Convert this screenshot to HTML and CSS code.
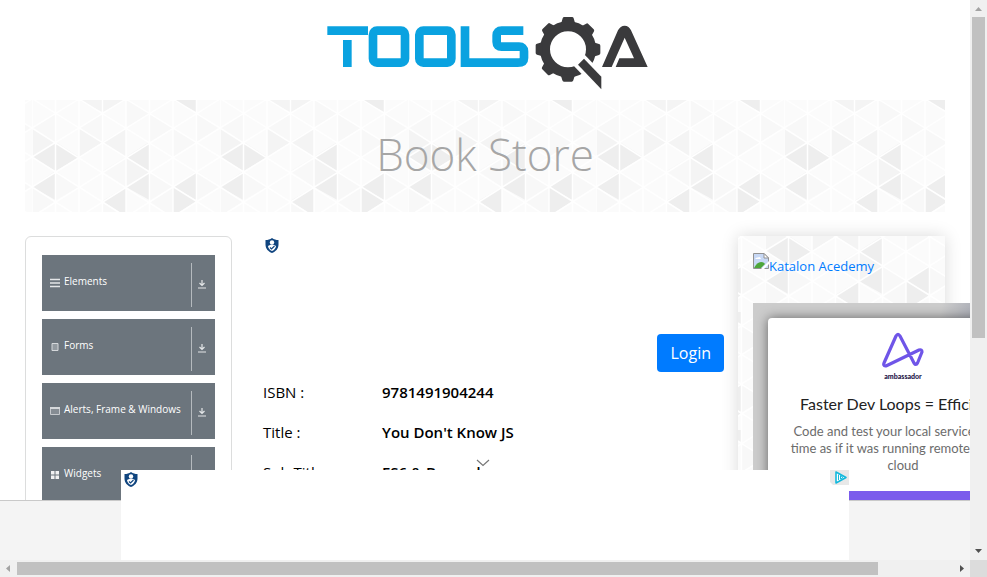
FILE: index.html
```html
<!DOCTYPE html>
<html lang="en">
<head>
<meta charset="utf-8">
<title>Book Store</title>
<link rel="stylesheet" href="styles.css">
</head>
<body>
<svg class="defs" aria-hidden="true">
  <defs>
    <g id="tile">
      <path fill="#fbfbfb" d="M0 0H188V118H0Z"/>
      <path fill="#f8f8f8" d="M0 28L23.500 13V42ZM47 28L70.500 42V13ZM94 0V28L117.500 13ZM141 28L117.500 42V13ZM164.500 13V42L188 28ZM47 57L23.500 42V71ZM94 57V87L70.500 71ZM141 28V57L164.500 42ZM164.500 71V100L188 87ZM23.500 71V100L47 87ZM141 87L117.500 71V100ZM0 87V116L23.500 101ZM70.500 101V118H94V87ZM117.500 101L141 118V87Z"/>
      <path fill="#f4f4f4" d="M47 28V57L70.500 42ZM94 28V57L70.500 42ZM47 0H94L70.500 12ZM0 28L23.500 42L0 57ZM94 57L117.500 71L94 87Z"/>
      <path fill="#eeeeee" d="M0 57L23.500 42V71ZM47 57L23.500 42V71ZM0 87L23.500 71V100ZM94 57L117.500 42V71ZM94 87L117.500 71V100ZM141 87L164.500 71V100ZM141 0H164.500V12ZM141 87V116L164.500 101ZM70.500 101L94 87V116Z"/>
      <path fill="none" stroke="#fff" stroke-width="1.500" d="M0 0V118M23.500 0V118M47 0V118M70.500 0V118M94 0V118M117.500 0V118M141 0V118M164.500 0V118M0 -1.500L188 116M0 28L141 118M0 57L94 117M0 87L47 117M47 -1L188 87M94 -1L188 57M141 -1L188 28M0 28L47 -1M0 57L94 -1M0 87L141 -1M0 117L188 -1M47 117L188 28M94 117L188 57M141 117L188 87"/>
    </g>
    <pattern id="triangles" width="188" height="118" x="7" y="0" patternUnits="userSpaceOnUse"><use href="#tile"/></pattern>
    <pattern id="triangles-side" width="188" height="118" x="27" y="-42" patternUnits="userSpaceOnUse"><use href="#tile"/></pattern>
    <symbol id="download" viewBox="0 0 10 10"><path d="M5 1V6M2.500 4L5 6.500L7.500 4M1 9H9" fill="none" stroke="#e4e6e8" stroke-width="1.200"/></symbol>
    <symbol id="shield" viewBox="0 0 14 15">
      <path fill="#10457f" d="M7 0C9 1.500 11 2 13.500 2V6.500C13.500 11 10.500 13.500 7 15C3.500 13.500.5 11 .5 6.500V2C3 2 5 1.500 7 0Z"/>
      <circle cx="7" cy="4.500" r="2.200" fill="#fff"/>
      <path fill="#fff" d="M3 8Q7 5.500 11 8Q10.500 11.500 7 13Q3.500 11.500 3 8Z"/>
      <path fill="none" stroke="#10457f" stroke-width="1.200" d="M5 9.500L6.500 11L9.500 8"/>
    </symbol>
  </defs>
</svg>
<div class="window">
  <div class="view">
    <header class="header">
      <svg class="logo" viewBox="38 45 975 225" role="img" aria-label="ToolsQA">
        <g fill="none" stroke="#0aa2e0" stroke-width="26">
          <path d="M51 92H173M111 120V201"/>
          <rect x="188" y="92" width="96" height="96" rx="12"/>
          <rect x="327" y="92" width="96" height="96" rx="12"/>
          <path d="M464 79V188H622Q641 188 641 174V154Q641 140 626 140H574Q559 140 559 126V106Q559 92 574 92H639"/>
        </g>
        <g fill="#3a3a3c">
          <circle cx="773" cy="148" r="69" fill="none" stroke="#3a3a3c" stroke-width="30"/>
          <g id="teeth">
            <path id="tooth" d="M752 72L757 55Q758 51 762 51H785Q789 51 790 55L795 72Z"/>
            <use href="#tooth" transform="rotate(45 773 148)"/>
            <use href="#tooth" transform="rotate(90 773 148)"/>
            <use href="#tooth" transform="rotate(180 773 148)"/>
            <use href="#tooth" transform="rotate(225 773 148)"/>
            <use href="#tooth" transform="rotate(270 773 148)"/>
            <use href="#tooth" transform="rotate(315 773 148)"/>
          </g>
          <path fill="#fff" d="M790 197L823 164L890 234V280H870Z"/>
          <path d="M803 194L821 176L873 230V268Z"/>
          <path d="M875 201L923 91Q930 77 943 77Q956 77 962 91L1012 201H916L927 175H971L943 113L904 201Z"/>
        </g>
      </svg>
    </header>
    <div class="banner">
      <svg class="backdrop" aria-hidden="true"><rect width="100%" height="100%" fill="url(#triangles)"/></svg>
      <h1 class="title">Book Store</h1>
    </div>
    <div class="columns">
      <nav class="menu">
        <button class="group" type="button">
          <svg class="icon" viewBox="0 0 10 10"><path d="M0 1.500H10M0 5H10M0 8.500H10" stroke="#e4e6e8" stroke-width="1.500"/></svg>
          <span class="name">Elements</span><span class="drop"><svg class="arrow"><use href="#download"/></svg></span>
        </button>
        <button class="group" type="button">
          <svg class="icon" viewBox="0 0 10 10"><path d="M2 1.500H8V8.500H2Z" fill="#939aa0" stroke="#d5d8db"/></svg>
          <span class="name">Forms</span><span class="drop"><svg class="arrow"><use href="#download"/></svg></span>
        </button>
        <button class="group" type="button">
          <svg class="icon" viewBox="0 0 10 10"><path d="M.5 1.500H9.500V8.500H.5Z" fill="#858c93" stroke="#c5c8cc"/><path d="M0 2H10" stroke="#d5d8db" stroke-width="2"/></svg>
          <span class="name">Alerts, Frame &amp; Windows</span><span class="drop"><svg class="arrow"><use href="#download"/></svg></span>
        </button>
        <button class="group" type="button">
          <svg class="icon" viewBox="0 0 10 10"><path d="M1 1H4.500V4.500H1ZM5.500 1H9V4.500H5.500ZM1 5.500H4.500V9H1ZM5.500 5.500H9V9H5.500Z" fill="#f0f1f2"/></svg>
          <span class="name">Widgets</span><span class="drop"><svg class="arrow"><use href="#download"/></svg></span>
        </button>
      </nav>
      <main class="book">
        <svg class="shield"><use href="#shield"/></svg>
        <div class="actions"><button class="login" type="button">Login</button></div>
        <dl class="facts">
          <dt>ISBN :</dt><dd>9781491904244</dd>
          <dt>Title :</dt><dd>You Don't Know JS</dd>
          <dt>Sub Title :</dt><dd>ES6 &amp; Beyond</dd>
        </dl>
      </main>
      <aside class="side">
        <svg class="backdrop" aria-hidden="true"><rect width="100%" height="100%" fill="url(#triangles-side)"/></svg>
        <a class="academy" href="#"><svg class="broken" viewBox="0 0 16 16" aria-hidden="true"><path d="M.5 .5H11L15.500 5V15.500H.5Z" fill="#c7d8f5" stroke="#929292"/><path d="M2 6Q3 4 5 4.500Q7 3 8 6Z" fill="#fff"/><path d="M1 15Q4 9 8 9Q11 9 12 11L8 15Z" fill="#4da63a"/><path d="M8 16L16 8V11L11 16Z" fill="#fff"/><path d="M11 .5V5H15.500Z" fill="#fff" stroke="#929292"/></svg>Katalon Acedemy</a>
        <section class="promo">
          <div class="card">
            <svg class="mark" viewBox="0 0 42 36" aria-hidden="true"><path d="M3.500 34Q1 33.500 2 31L14 4Q16 .5 18 4L32 31Q34 34 35.500 31L40 20Q40 17 37 18L5 33.500Q4 34 3.500 34Z" fill="none" stroke="#6f55e8" stroke-width="3.200" stroke-linejoin="round"/></svg>
            <p class="brand">ambassador</p>
            <h2 class="headline">Faster Dev Loops = Efficiency</h2>
            <p class="copy">Code and test your local service in real<br>time as if it was running remotely in the<br>cloud</p>
          </div>
          <div class="strip"></div>
        </section>
      </aside>
    </div>
    <div class="dock">
      <div class="slot">
        <svg class="chevron" viewBox="0 0 14 8" aria-hidden="true"><path d="M1 1L7 6.500L13 1" fill="none" stroke="#777" stroke-width="1.200"/></svg>
        <svg class="shield"><use href="#shield"/></svg>
        <svg class="choices" viewBox="0 0 19 15" aria-hidden="true"><path d="M0 0H19V15H3L0 12Z" fill="#e8e8e8"/><path d="M6 2V13L16 7.500Z" fill="#fff" stroke="#12b8dc" stroke-width="1.600" stroke-linejoin="round"/><path d="M8.500 4.500V10M10.500 5.500L13 7.500L10.500 9Z" fill="none" stroke="#12b8dc" stroke-width="1"/></svg>
      </div>
    </div>
  </div>
  <div class="bar vertical" aria-hidden="true">
    <svg class="cap" viewBox="0 0 17 17"><path d="M5 11L8.500 7L12 11Z" fill="#a3a3a3"/></svg>
    <div class="track"><div class="thumb"></div></div>
    <svg class="cap" viewBox="0 0 17 17"><path d="M5 6L8.500 10L12 6Z" fill="#505050"/></svg>
  </div>
  <div class="bar horizontal" aria-hidden="true">
    <svg class="cap" viewBox="0 0 17 17"><path d="M10 5L6 8.500L10 12Z" fill="#a3a3a3"/></svg>
    <div class="track"><div class="thumb"></div></div>
    <svg class="cap" viewBox="0 0 17 17"><path d="M7 5L11 8.500L7 12Z" fill="#505050"/></svg>
  </div>
  <div class="corner"></div>
</div>
</body>
</html>
```
FILE: styles.css
```css
* { box-sizing: border-box; }
body, h1, h2, p, dl, dd { margin: 0; }
body { background: #fff; color: #000; font: 15px/24px "Open Sans", "Noto Sans", sans-serif; }
svg { display: block; flex: none; }
button { border: 0; font: inherit; }

.defs { position: absolute; width: 0; height: 0; }
.window { display: grid; grid-template: minmax(0, 1fr) 17px / minmax(0, 1fr) 17px; height: 100vh; }
.view { position: relative; overflow: hidden; padding: 0 25px; }

.header { display: flex; justify-content: center; padding: 15px 0 10px; }
.logo { width: 325px; height: 75px; }

.backdrop { position: absolute; inset: 0; width: 100%; height: 100%; }
.banner { position: relative; padding: 24px 0 28px; text-align: center; }
.title { position: relative; color: #a6a6a6; font-size: 44px; font-weight: 300; line-height: 60px; }

.columns { display: grid; grid-template-columns: minmax(0, 9fr) minmax(0, 22fr) minmax(0, 9fr); margin-top: 24px; }

.menu { display: flex; flex-direction: column; gap: 8px; padding: 18px 16px; border: 1px solid #dcdddd; border-radius: 6px; }
.group { display: flex; align-items: center; height: 56px; padding: 0 0 0 8px; background: #6c757d; color: #fff; font-size: 10px; line-height: 16px; text-align: left; }
.icon { width: 10px; height: 10px; margin-right: 4px; }
.name { flex: 1; padding-bottom: 4px; white-space: nowrap; }
.drop { display: flex; align-items: center; height: 44px; margin-top: 4px; padding: 0 8px 3px 5px; border-left: 1px solid #b5babe; }
.arrow { width: 10px; height: 10px; }

.book { padding: 2px 14px 0 31px; }
.shield { width: 14px; height: 15px; margin-left: 2px; }
.actions { display: flex; justify-content: flex-end; padding-top: 81px; }
.login { height: 38px; padding: 0 13px; border-radius: 4px; background: #007bff; color: #fff; font-size: 16px; }
.facts { display: grid; grid-template-columns: 119px 1fr; gap: 16px 0; padding-top: 8px; }
.facts dd { font-weight: 600; }

.side { position: relative; padding: 16px 15px; box-shadow: 0 0 16px rgba(0, 0, 0, 0.15); }
.academy { position: relative; display: flex; height: 51px; color: #007bff; font-size: 13px; line-height: 28px; text-decoration: none; white-space: nowrap; }
.broken { width: 16px; height: 16px; margin-top: 1px; }
.promo { position: relative; width: 300px; height: 250px; padding-top: 15px; background: linear-gradient(100deg, #ccc 55%, #7c8298 80%); }
.card { display: flex; flex-direction: column; align-items: center; height: 173px; margin: 0 15px; padding-top: 14px; border-radius: 4px 4px 0 0; background: #fff; box-shadow: 0 0 12px rgba(0, 0, 0, 0.5); text-align: center; white-space: nowrap; font-family: Lato, Roboto, sans-serif; }
.mark { width: 42px; height: 36px; }
.brand { color: #1c1246; font-size: 7px; font-weight: 900; line-height: 16px; }
.headline { padding-top: 8px; color: #222; font-size: 16px; font-weight: 400; line-height: 24px; }
.copy { padding-top: 7px; color: #6c6c6c; font-size: 13px; line-height: 17px; }
.strip { position: relative; height: 10px; background: #7b5cec; }

.dock { position: absolute; right: 0; bottom: 0; left: 0; height: 60px; border-top: 1px solid #c9c9c9; background: #f4f4f4; }
.slot { position: absolute; bottom: 0; left: 50%; display: flex; justify-content: space-between; width: 728px; height: 90px; margin-left: -364px; background: #fff; }
.slot .shield { margin: 2px 3px; }
.choices { width: 19px; height: 15px; }
.chevron { position: absolute; bottom: 93px; left: 355px; width: 14px; height: 8px; }

.bar { display: flex; background: #f0f0f0; }
.vertical { flex-direction: column; }
.horizontal { grid-area: 2 / 1; }
.cap { width: 17px; height: 17px; }
.track { flex: 1; display: flex; }
.vertical .track { padding: 0 2px; }
.horizontal .track { padding: 2px 0; }
.thumb { background: #c1c1c1; }
.vertical .thumb { width: 100%; height: 61%; }
.horizontal .thumb { width: 92%; height: 100%; }
.corner { background: #dcdcdc; }
```
